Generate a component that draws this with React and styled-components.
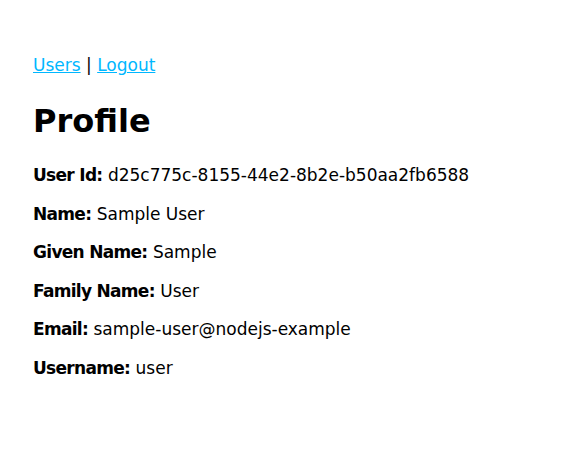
import styled, { createGlobalStyle } from "styled-components";

const Global = createGlobalStyle`
  body {
    margin: 0;
    padding: 55px 33px;
    font-family: "DejaVu Sans", "Lucida Grande", Helvetica, Arial, sans-serif;
    font-size: 17px;
    color: #000;
    background: #fff;
  }
`;

const Nav = styled.div`
  line-height: 21px;
`;

const NavLink = styled.a`
  color: #00b7ff;
`;

const Title = styled.h1`
  font-size: 32px;
  line-height: 38px;
  margin: 26px 0 25px;
`;

const Field = styled.p`
  margin: 0 0 17.6px;
  line-height: 21px;
`;

const Label = styled.b`
  letter-spacing: -0.7px;
`;

const fields = [
  ["User Id", "d25c775c-8155-44e2-8b2e-b50aa2fb6588"],
  ["Name", "Sample User"],
  ["Given Name", "Sample"],
  ["Family Name", "User"],
  ["Email", "sample-user@nodejs-example"],
  ["Username", "user"],
];

export default function App() {
  return (
    <>
      <Global />
      <Nav>
        <NavLink href="#">Users</NavLink> | <NavLink href="#">Logout</NavLink>
      </Nav>
      <Title>Profile</Title>
      {fields.map(([label, value]) => (
        <Field key={label}>
          <Label>{label}:</Label> {value}
        </Field>
      ))}
    </>
  );
}
